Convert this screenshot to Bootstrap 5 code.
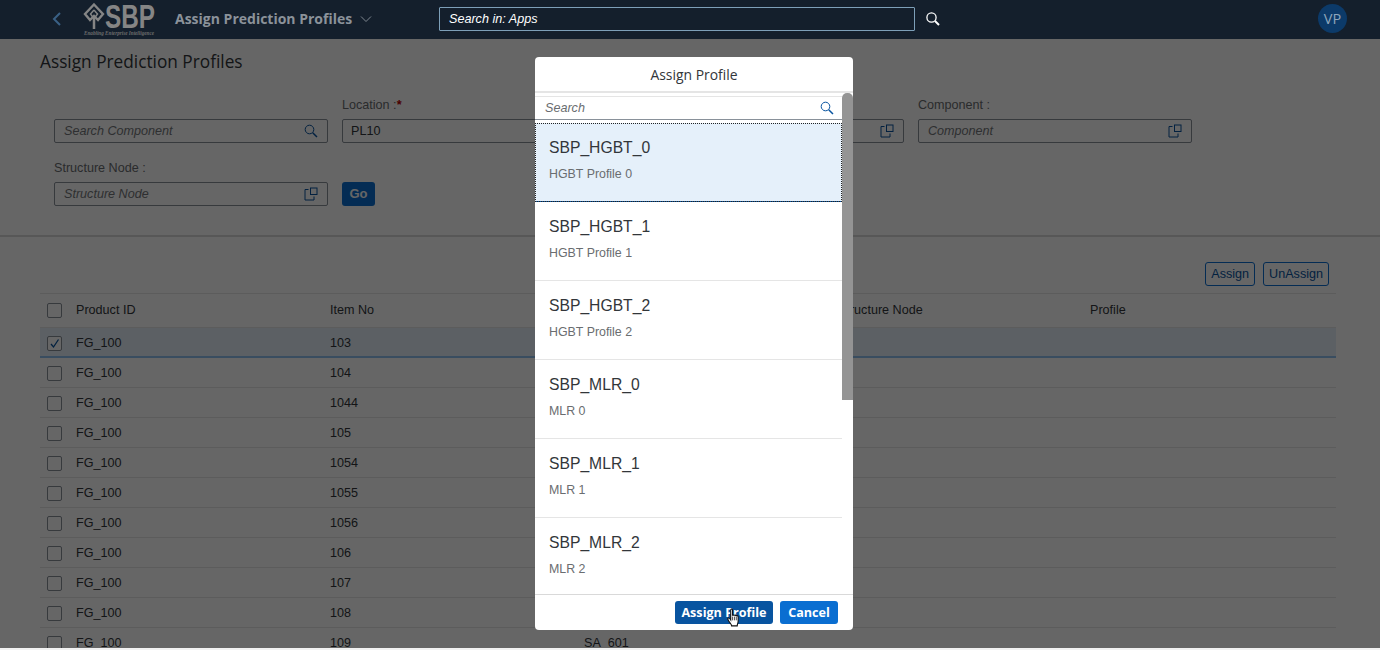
<!DOCTYPE html>
<html lang="en"><head><meta charset="utf-8"><title>Assign Prediction Profiles</title>
<link href="https://cdn.jsdelivr.net/npm/bootstrap@5.3.0/dist/css/bootstrap.min.css" rel="stylesheet">
<style>
html,body{height:650px;overflow:hidden;background:#f2f2f2}
body{font-family:"Liberation Sans",Arial,sans-serif;font-size:14px;color:#32363a;position:relative}
.page-frame{height:648px;overflow:hidden;background:#fff;position:relative}
.shell{height:39px;background:#141f2c;color:#fff;position:relative;z-index:2;padding-bottom:2px}
.shell-back{margin-left:50px;width:13px}
.logo-svg{margin-left:20px;flex:none;overflow:visible}
.logo-word{font-family:"Liberation Sans",sans-serif;font-weight:700;font-size:33px;fill:#858585}
.logo-tag{font-family:"Liberation Serif",serif;font-style:italic;font-weight:700;font-size:6px;fill:#6d6d6d}
.shell-title{font-family:"Open Sans",sans-serif;font-weight:700;font-size:14px;color:#8b929a;margin-left:20px;width:178px;white-space:nowrap}
.shell-search{width:476px;height:24px;margin-left:67px;border:1px solid #7d9fb8;border-radius:1px;padding-left:9px;font-style:italic;font-size:12.6px;line-height:22px;color:#fff}
.shell-avatar{width:29px;height:29px;border-radius:50%;background:#0c3a69;color:#8ea6bb;font-family:"Open Sans",sans-serif;font-size:14.5px;margin-left:377px}
.filter-zone{height:198px;border-bottom:2px solid #d9d9d9;padding:0 40px}
.page-title{font-family:"Open Sans",sans-serif;font-size:17.25px;font-weight:400;line-height:24px;margin:0;padding-top:11px;color:#32363a}
.filter-grid{display:grid;grid-template-columns:repeat(4,274px);column-gap:14px;margin:23px 0 0 14px}
.f-label{font-size:12.6px;line-height:16px;height:17px;color:#6a6d70;display:block;margin-bottom:5px;white-space:nowrap}
.f-req{color:#b00;font-weight:700}
.f-box{height:24px;border:1px solid #89919a;border-radius:2px;background:#fff;padding:0 9px;line-height:22px;font-size:12.6px}
.f-tight{padding-left:8px}
.f-ph{font-style:italic;color:#74777a}
.f-box svg{flex:none}
.row-gap{margin-top:17px}
.go-btn{width:33px;height:24px;background:#0a6ed1;color:#fff;border-radius:3px;font-size:13px;font-weight:700;padding:0;border:0;line-height:24px}
.table-zone{padding:25px 44px 0 40px}
.act-row{height:24px;padding-right:7px;margin-bottom:7px}
.act-btn{height:24px;padding:0 5px;border:1px solid #0a6ed1;border-radius:3px;background:#fff;color:#0854a0;font-size:12.6px;line-height:22px}
.data-table{width:1296px;table-layout:fixed;border-collapse:collapse;font-size:12.6px;color:#32363a}
.data-table th,.data-table td{padding:1px 0 0;font-weight:400;border-bottom:1px solid #e5e5e5;height:30px;white-space:nowrap;vertical-align:middle}
.data-table thead th{height:34px;border-top:1px solid #e5e5e5;background:#fff;color:#32363a;padding:0}
.data-table tr.is-sel td{background:#e5f0fa;box-shadow:inset 0 -1px 0 #90c0f0;border-bottom:1px solid #90c0f0}
.data-table .col-check{width:36px}
.tick{display:block;width:15px;height:15px;border:1px solid #89919a;border-radius:2px;margin-left:7px;background:#fff}
.scrim{position:absolute;left:0;top:0;width:100%;height:648px;background:rgba(0,0,0,.6)}
.dialog-box{position:absolute;left:535px;top:57px;width:318px;height:573px;background:#fff;border-radius:4px;overflow:hidden;display:flex;flex-direction:column;z-index:3}
.dlg-head{height:36px;text-align:center;font-family:"Open Sans",sans-serif;font-size:13.9px;line-height:36px;color:#32363a;flex:none;border-bottom:2px solid #e5e5e5}
.dlg-body{flex:1;display:flex;min-height:0}
.dlg-list{width:307px;flex:none;padding-top:3px;overflow:hidden}
.dlg-search{height:24px;background:#fff;border-top:1px solid #e5e5e5;border-bottom:1px solid #89919a;padding:0 8px 0 10px;margin-bottom:3px;font-style:italic;font-size:12.6px;color:#6a6d70;line-height:22px}
.prof-item{height:79px;padding:14px 14px 0;border-bottom:1px solid #e5e5e5;border-left:0;border-right:0;border-top:0;border-radius:0;background:#fff}
.prof-item.is-cur{background:#e5f0fa;outline:1px dotted #222;outline-offset:-1px;border-bottom:1px solid #0854a0}
.prof-name{font-size:15.7px;line-height:22px;color:#32363a}
.prof-sub{font-size:12.4px;line-height:16px;margin-top:7px;color:#6a6d70}
.dlg-track{width:11px;flex:none;background:#fff}
.dlg-thumb{height:307px;background:#949494;border-radius:5px 5px 0 0}
.dlg-foot{height:36px;flex:none;border-top:1px solid #d9d9d9;padding:6px 15px 0 0}
.dlg-btn{height:23px;border:0;border-radius:3px;color:#fff;font-size:12.6px;font-weight:700;padding:0;line-height:22px;font-family:"Open Sans","Liberation Sans",sans-serif}
.dlg-btn-a{width:98px;background:#0854a0;margin-right:7px}
.dlg-btn-b{width:58px;background:#0a6ed1}
.hand{position:absolute;left:727px;top:608px;width:13px;height:20px;z-index:4}
</style></head><body>
<div class="page-frame">
<nav class="shell d-flex align-items-center">
 <svg class="shell-back" viewBox="0 0 13 16" height="16"><path d="M10 2 4 8 10 14" fill="none" stroke="#3a6085" stroke-width="2"/></svg>
 <svg class="logo-svg" width="72" height="37" viewBox="0 0 72 37"><path d="M11 4.500 20 14 15 20 11 16 7 20 2 14Z" fill="none" stroke="#858585" stroke-width="2.400"/><path d="M11 10 14.500 14 11.500 18V29M11 10 7.500 14 10.500 18V29" fill="none" stroke="#858585" stroke-width="1.500"/><text class="logo-word" x="22" y="28" textLength="50" lengthAdjust="spacingAndGlyphs">SBP</text><text class="logo-tag" x="1" y="35" textLength="70" lengthAdjust="spacingAndGlyphs">Enabling Enterprise Intelligence</text></svg>
 <div class="shell-title">Assign Prediction Profiles</div>
 <svg width="12" height="8" viewBox="0 0 12 8" style="margin-left:7px"><path d="M1 1.500 6 6.500 11 1.500" fill="none" stroke="#7f8790" stroke-width="1"/></svg>
 <div class="shell-search">Search in: Apps</div>
 <svg width="16" height="16" viewBox="0 0 16 16" style="margin-left:10px"><circle cx="6.500" cy="6.500" r="4.600" fill="none" stroke="#fff" stroke-width="1.300"/><path d="M10 10 14 14" stroke="#fff" stroke-width="2"/></svg>
 <div class="shell-avatar d-flex align-items-center justify-content-center">VP</div>
</nav>
<section class="filter-zone">
 <h1 class="page-title">Assign Prediction Profiles</h1>
 <div class="filter-grid">
  <div><span class="f-label">&nbsp;</span><div class="f-box d-flex justify-content-between align-items-center"><span class="f-ph">Search Component</span><svg width="14" height="14" viewBox="0 0 14 14"><circle cx="5.500" cy="5.500" r="4.300" fill="none" stroke="#0854a0" stroke-width="1"/><path d="M8.700 8.700 13 13" stroke="#0854a0" stroke-width="1.500"/></svg></div></div>
  <div><span class="f-label">Location :<span class="f-req">*</span></span><div class="f-box f-tight"><span>PL10</span></div></div>
  <div><span class="f-label">&nbsp;</span><div class="f-box d-flex justify-content-end align-items-center"><svg width="14" height="14" viewBox="0 0 14 14"><path d="M4.500 2.500H1V13H10V9.500" fill="none" stroke="#0854a0"/><rect x="6.500" y="1" width="6.500" height="6.500" fill="none" stroke="#0854a0"/></svg></div></div>
  <div><span class="f-label">Component :</span><div class="f-box d-flex justify-content-between align-items-center"><span class="f-ph">Component</span><svg width="14" height="14" viewBox="0 0 14 14"><path d="M4.500 2.500H1V13H10V9.500" fill="none" stroke="#0854a0"/><rect x="6.500" y="1" width="6.500" height="6.500" fill="none" stroke="#0854a0"/></svg></div></div>
  <div class="row-gap"><span class="f-label">Structure Node :</span><div class="f-box d-flex justify-content-between align-items-center"><span class="f-ph">Structure Node</span><svg width="14" height="14" viewBox="0 0 14 14"><path d="M4.500 2.500H1V13H10V9.500" fill="none" stroke="#0854a0"/><rect x="6.500" y="1" width="6.500" height="6.500" fill="none" stroke="#0854a0"/></svg></div></div>
  <div class="row-gap d-flex align-items-end"><button class="btn go-btn">Go</button></div>
 </div>
</section>
<section class="table-zone">
 <div class="act-row d-flex justify-content-end gap-2"><button class="act-btn">Assign</button><button class="act-btn">UnAssign</button></div>
 <table class="data-table"><thead><tr><th class="col-check"><span class="tick"></span></th><th style="width:254px">Product ID</th><th style="width:254px">Item No</th><th style="width:254px"></th><th style="width:252px">Structure Node</th><th>Profile</th></tr></thead>
 <tbody>
 <tr class="is-sel"><td><span class="tick d-flex align-items-center justify-content-center"><svg width="11" height="11" viewBox="0 0 11 11"><path d="M2 6 4.500 9 9.500 1.500" fill="none" stroke="#0854a0" stroke-width="1.300"/></svg></span></td><td>FG_100</td><td>103</td><td></td><td></td><td></td></tr>
 <tr><td><span class="tick"></span></td><td>FG_100</td><td>104</td><td></td><td></td><td></td></tr>
 <tr><td><span class="tick"></span></td><td>FG_100</td><td>1044</td><td></td><td></td><td></td></tr>
 <tr><td><span class="tick"></span></td><td>FG_100</td><td>105</td><td></td><td></td><td></td></tr>
 <tr><td><span class="tick"></span></td><td>FG_100</td><td>1054</td><td></td><td></td><td></td></tr>
 <tr><td><span class="tick"></span></td><td>FG_100</td><td>1055</td><td></td><td></td><td></td></tr>
 <tr><td><span class="tick"></span></td><td>FG_100</td><td>1056</td><td></td><td></td><td></td></tr>
 <tr><td><span class="tick"></span></td><td>FG_100</td><td>106</td><td></td><td></td><td></td></tr>
 <tr><td><span class="tick"></span></td><td>FG_100</td><td>107</td><td></td><td></td><td></td></tr>
 <tr><td><span class="tick"></span></td><td>FG_100</td><td>108</td><td></td><td></td><td></td></tr>
 <tr><td><span class="tick"></span></td><td>FG_100</td><td>109</td><td>SA_601</td><td></td><td></td></tr>
 </tbody></table>
</section>
<div class="scrim"></div>
</div>
<div class="dialog-box">
 <div class="dlg-head">Assign Profile</div>
 <div class="dlg-body">
  <div class="dlg-list">
   <div class="dlg-search d-flex justify-content-between align-items-center"><span>Search</span><svg width="14" height="14" viewBox="0 0 14 14"><circle cx="5.500" cy="5.500" r="4.300" fill="none" stroke="#0854a0" stroke-width="1"/><path d="M8.700 8.700 13 13" stroke="#0854a0" stroke-width="1.500"/></svg></div>
   <div class="list-group list-group-flush">
    <div class="list-group-item prof-item is-cur"><div class="prof-name">SBP_HGBT_0</div><div class="prof-sub">HGBT Profile 0</div></div>
    <div class="list-group-item prof-item"><div class="prof-name">SBP_HGBT_1</div><div class="prof-sub">HGBT Profile 1</div></div>
    <div class="list-group-item prof-item"><div class="prof-name">SBP_HGBT_2</div><div class="prof-sub">HGBT Profile 2</div></div>
    <div class="list-group-item prof-item"><div class="prof-name">SBP_MLR_0</div><div class="prof-sub">MLR 0</div></div>
    <div class="list-group-item prof-item"><div class="prof-name">SBP_MLR_1</div><div class="prof-sub">MLR 1</div></div>
    <div class="list-group-item prof-item"><div class="prof-name">SBP_MLR_2</div><div class="prof-sub">MLR 2</div></div>
   </div>
  </div>
  <div class="dlg-track"><div class="dlg-thumb"></div></div>
 </div>
 <div class="dlg-foot d-flex justify-content-end"><button class="btn dlg-btn dlg-btn-a">Assign Profile</button><button class="btn dlg-btn dlg-btn-b">Cancel</button></div>
</div>
<svg class="hand" viewBox="0 0 14 21"><path d="M4 2c0-1.500 2-1.500 2 0v6c0-1 2-1 2 0 0-1 2-1 2 .5 0-.8 2-.8 2 .5V14c0 2-1 3-1 5H5c0-2-3-4-4-7-.5-1.500 1-2 2-1l1 1.500Z" fill="#fff" stroke="#111" stroke-width="1.200"/><path d="M6 9v4M8 9v4M10 9v4" stroke="#111" stroke-width=".8"/></svg>
</body></html>
